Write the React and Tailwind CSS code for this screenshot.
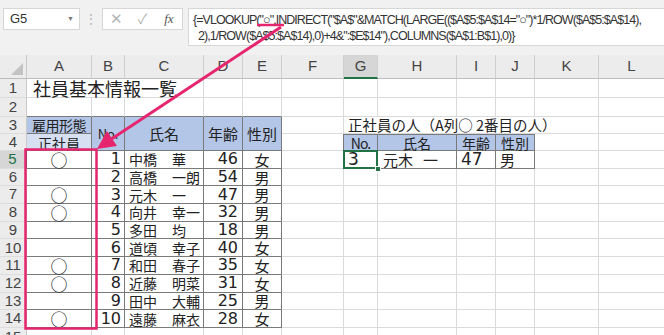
const COLS = ['', 'A', 'B', 'C', 'D', 'E', 'F', 'G', 'H', 'I', 'J', 'K', 'L']

const PEOPLE = [
  ['○', 1, '中橋', '華', 46, '女'],
  ['', 2, '高橋', '一朗', 54, '男'],
  ['○', 3, '元木', '一', 47, '男'],
  ['○', 4, '向井', '幸一', 32, '男'],
  ['', 5, '多田', '均', 18, '男'],
  ['', 6, '道頃', '幸子', 40, '女'],
  ['○', 7, '和田', '春子', 35, '女'],
  ['○', 8, '近藤', '明菜', 31, '女'],
  ['', 9, '田中', '大輔', 25, '男'],
  ['○', 10, '遠藤', '麻衣', 28, '女'],
]

const LINE1 = '{=VLOOKUP("○",INDIRECT("$A$"&MATCH(LARGE(($A$5:$A$14="○")*1/ROW($A$5:$A$14),'
const LINE2 = '2),1/ROW($A$5:$A$14),0)+4&":$E$14"),COLUMNS($A$1:B$1),0)}'

const jp = "font-['Noto_Sans_CJK_JP',sans-serif]"
const num = "font-['DejaVu_Sans',sans-serif] text-[16px]"

function inTable(r, c) {
  return (r >= 3 && r <= 14 && c >= 1 && c <= 5) || (r >= 4 && r <= 5 && c >= 7 && c <= 10)
}

function FormulaBar() {
  return (
    <div className="h-[55px] bg-[#f1f1f1] flex items-start pt-[8px] pl-[3px] text-[#333]">
      <div className="w-[77px] h-[22px] bg-white border border-[#d6d6d6] flex items-center justify-between pl-[6px] pr-[5px] text-[13px]">
        <span>G5</span>
        <span className="text-[7px] text-[#777]">▼</span>
      </div>
      <div className="w-[22px] h-[22px] flex items-center justify-center text-[12px] text-[#b0b0b0]">⋮</div>
      <div className="w-[81px] h-[22px] bg-white border border-[#d6d6d6] flex items-center text-[#b5b5b5]">
        <span className="w-[27px] text-center text-[15px]">✕</span>
        <span className="w-[27px] text-center text-[14px]">✓</span>
        <span className="w-[27px] text-center text-[13px] text-[#555] italic font-['Liberation_Serif',serif]">fx</span>
      </div>
      <div className="ml-[5px] flex-1 h-[38px] bg-white border border-r-0 border-[#d6d6d6] pl-[4px] pt-[3px] text-[12.5px] leading-[16px] tracking-[-0.95px] whitespace-nowrap overflow-hidden text-[#333]">
        <div>{LINE1}</div>
        <div className="pl-[5px]">{LINE2}</div>
      </div>
    </div>
  )
}

function buildCells() {
  const cells = []
  for (let r = 0; r <= 15; r++) {
    for (let c = 0; c <= 12; c++) {
      if (r === 1 && (c === 2 || c === 3)) continue
      if (r === 3 && c >= 8 && c <= 11) continue
      if (r === 4 && c >= 2 && c <= 5) continue

      const key = r + '-' + c
      // corner
      if (r === 0 && c === 0) {
        cells.push(
          <div key={key} className="bg-[#ececec] border-r border-b border-r-[#c9c9c9] border-b-[#bdbdbd] flex items-end justify-end p-[3px]">
            <svg width="12" height="12"><polygon points="12,0 12,12 0,12" fill="#c3c3c3" /></svg>
          </div>
        )
        continue
      }
      // column letters
      if (r === 0) {
        const sel = c === 7
        cells.push(
          <div key={key} className={`flex items-center justify-center text-[15px] text-[#444] border-r border-r-[#cfcfcf] ${sel ? 'bg-[#d6d6d6] border-b-2 border-b-[#217346]' : 'bg-[#ececec] border-b border-b-[#bdbdbd]'}`}>
            {COLS[c]}
          </div>
        )
        continue
      }
      // row numbers
      if (c === 0) {
        const sel = r === 5
        cells.push(
          <div key={key} className={`flex items-center justify-center text-[15px] border-b border-b-[#dcdcdc] ${sel ? 'bg-[#d6d6d6] text-[#217346] border-r-2 border-r-[#217346]' : 'bg-[#ececec] text-[#444] border-r border-r-[#c9c9c9]'}`}>
            {r}
          </div>
        )
        continue
      }

      const right = inTable(r, c) || inTable(r, c + 1) ? 'border-r-[#7a7a7a]' : 'border-r-[#dadada]'
      let bottom = inTable(r, c) || inTable(r + 1, c) ? 'border-b-[#7a7a7a]' : 'border-b-[#dadada]'
      let cls = 'border-r border-b overflow-visible whitespace-nowrap flex items-center leading-none text-[#222] '
      let content = null

      if (r === 1 && c === 1) {
        cls += `col-span-3 ${jp} text-[18px] pl-[6px] text-[#111] `
        bottom = 'border-b-[#dadada]'
        content = '社員基本情報一覧'
      } else if (r === 3 && c === 1) {
        cls += `bg-[#b4c6e7] justify-center ${jp} text-[14px] tracking-[-0.5px] `
        content = '雇用形態'
      } else if (r === 3 && c >= 2 && c <= 5) {
        cls += `row-span-2 bg-[#b4c6e7] justify-center ${jp} `
        content = ['No.', '氏名', '年齢', '性別'][c - 2]
        cls += c === 2 ? 'text-[13px] ' : 'text-[15px] '
      } else if (r === 3 && c === 7) {
        cls += `col-span-5 ${jp} text-[14.5px] pl-[4px] `
        bottom = 'border-b-[#dadada]'
        content = '正社員の人（A列○ 2番目の人）'
      } else if (r === 4 && c === 1) {
        cls += `bg-[#d6e0f2] justify-center ${jp} text-[14px] items-start pt-[2px] `
        content = '正社員'
      } else if (r === 4 && c >= 7 && c <= 10) {
        cls += `bg-[#b4c6e7] justify-center border-t border-t-[#7a7a7a] ${jp} text-[14px] `
        content = ['No.', '氏名', '年齢', '性別'][c - 7]
        if (c === 7) cls += 'text-[12px] tracking-[-1px] '
      } else if (r >= 5 && r <= 14 && c >= 1 && c <= 5) {
        const p = PEOPLE[r - 5]
        if (c === 1) {
          cls += `justify-center ${jp} text-[17px] `
          content = p[0]
        } else if (c === 2) {
          cls += `justify-end pr-[3px] ${num} `
          content = p[1]
        } else if (c === 3) {
          cls += `${jp} text-[14px] pl-[4px] `
          content = (
            <>
              <span className="w-[43px]">{p[2]}</span>
              <span>{p[3]}</span>
            </>
          )
        } else if (c === 4) {
          cls += `justify-end pr-[4px] ${num} `
          content = p[4]
        } else {
          cls += `justify-center ${jp} text-[15px] `
          content = p[5]
        }
      } else if (r === 5 && c >= 7 && c <= 10) {
        if (c === 7) {
          cls += `relative pl-[4px] ${num} text-[17px] `
          content = (
            <>
              3
              <span className="absolute -left-px -top-px -right-px -bottom-px border-2 border-[#217346]" />
              <span className="absolute -right-[4px] -bottom-[4px] w-[6px] h-[6px] bg-[#217346] border border-white" />
            </>
          )
        } else if (c === 8) {
          cls += `${jp} text-[15px] pl-[5px] `
          content = (
            <>
              <span className="w-[40px]">元木</span>
              <span>一</span>
            </>
          )
        } else if (c === 9) {
          cls += `pl-[4px] ${num} text-[17px] `
          content = 47
        } else {
          cls += `pl-[4px] ${jp} text-[15px] `
          content = '男'
        }
      }

      cells.push(
        <div key={key} className={`${cls}${right} ${bottom}`}>
          {content}
        </div>
      )
    }
  }
  return cells
}

function Sheet() {
  return (
    <div className="grid grid-cols-[27px_65px_33px_79px_39px_39px_62px_34px_79px_39px_39px_64px_66px] grid-rows-[24px_19px_19px_17px_17px_repeat(10,17.7px)_19px] bg-white">
      {buildCells()}
    </div>
  )
}

function Overlay() {
  return (
    <svg className="absolute left-0 top-0 pointer-events-none" width="664" height="335">
      <line x1="257" y1="25" x2="284" y2="25" stroke="#e5266f" strokeWidth="2.5" />
      <line x1="281" y1="27" x2="110" y2="140" stroke="#e5266f" strokeWidth="3" />
      <polygon points="97,149 117,146 107,131" fill="#e5266f" />
      <rect x="25.5" y="149.5" width="71" height="179" fill="none" stroke="#e5266f" strokeWidth="2.5" />
    </svg>
  )
}

export default function App() {
  return (
    <div className="relative w-[664px] h-[335px] overflow-hidden bg-white font-['Liberation_Sans','Noto_Sans_CJK_JP',sans-serif]">
      <FormulaBar />
      <Sheet />
      <Overlay />
    </div>
  )
}
